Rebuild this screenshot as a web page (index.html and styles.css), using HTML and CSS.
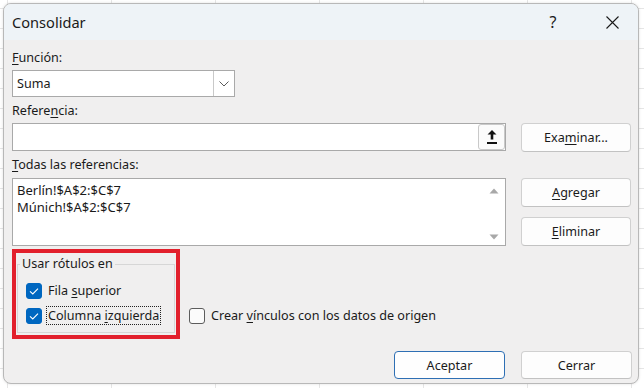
FILE: index.html
```html
<!DOCTYPE html>
<html lang="es">
<head>
<meta charset="utf-8">
<title>Consolidar</title>
<link rel="stylesheet" href="styles.css">
</head>
<body>
<div class="dialog">
  <div class="titlebar">
    <span class="title">Consolidar</span>
    <span class="help">?</span>
    <span class="close"><svg width="13" height="13" viewBox="0 0 13 13"><path d="M0.5 0.5 L12.5 12.5 M12.5 0.5 L0.5 12.5" stroke="#1a1a1a" stroke-width="1.1" fill="none"/></svg></span>
  </div>
  <div class="content">
    <div class="form">
      <div class="lbl lbl-first"><u>F</u>unción:</div>
      <div class="select">
        <span class="sel-text">Suma</span>
        <span class="sel-btn"><svg width="10" height="6" viewBox="0 0 10 6"><path d="M0.5 0.5 L5 5 L9.5 0.5" stroke="#5a5a5a" stroke-width="1" fill="none"/></svg></span>
      </div>
      <div class="lbl lbl-ref">Refere<u>n</u>cia:</div>
      <div class="refinput">
        <span class="upload"><svg width="12" height="16" viewBox="0 0 12 16"><path d="M6 1 L10.5 5.5 H7.3 V10.5 H4.7 V5.5 H1.5 Z" fill="#111"/><rect x="1" y="13" width="10" height="2" fill="#111"/></svg></span>
      </div>
      <button class="btn btn-side btn-exam">Exa<u>m</u>inar...</button>
      <div class="lbl lbl-all"><u>T</u>odas las referencias:</div>
      <div class="list">
        <div class="list-items">
          <div class="item">Berlín!$A$2:$C$7</div>
          <div class="item">Múnich!$A$2:$C$7</div>
        </div>
        <div class="scroll">
          <svg width="10" height="6" viewBox="0 0 10 6"><path d="M5 0.5 L9.5 5.5 H0.5 Z" fill="#a8a8a8"/></svg>
          <svg width="10" height="6" viewBox="0 0 10 6"><path d="M0.5 0.5 H9.5 L5 5.5 Z" fill="#a8a8a8"/></svg>
        </div>
      </div>
      <div class="side-stack">
        <button class="btn btn-side"><u>A</u>gregar</button>
        <button class="btn btn-side"><u>E</u>liminar</button>
      </div>
    </div>
    <div class="options">
      <div class="highlight">
        <fieldset class="group">
          <legend>Usar rótulos en</legend>
          <div class="check">
            <span class="box checked"><svg width="16" height="16" viewBox="0 0 16 16"><path d="M4 8.3 L6.8 11 L12 5.6" stroke="#fff" stroke-width="1.1" fill="none"/></svg></span>
            <span class="check-text">Fila <u>s</u>uperior</span>
          </div>
          <div class="check">
            <span class="box checked"><svg width="16" height="16" viewBox="0 0 16 16"><path d="M4 8.3 L6.8 11 L12 5.6" stroke="#fff" stroke-width="1.1" fill="none"/></svg></span>
            <span class="check-text focus">Columna <u>i</u>zquierda</span>
          </div>
        </fieldset>
      </div>
      <div class="check check-link">
        <span class="box"></span>
        <span class="check-text">Crear <u>v</u>ínculos con los datos de origen</span>
      </div>
    </div>
    <div class="footer">
      <button class="btn btn-foot btn-primary">Aceptar</button>
      <button class="btn btn-foot">Cerrar</button>
    </div>
  </div>
</div>
</body>
</html>
```
FILE: styles.css
```css
* { box-sizing: border-box; }
html, body { margin: 0; padding: 0; }
body {
  width: 644px;
  height: 388px;
  overflow: hidden;
  padding: 3px 0 0 3px;
  background-color: #ffffff;
  background-image:
    linear-gradient(to right, #e6e6e6 1px, transparent 1px),
    linear-gradient(to bottom, #e6e6e6 1px, transparent 1px);
  background-size: 104px 20px;
  background-position: 7px 8px;
  font-family: "Noto Sans", "Open Sans", sans-serif;
  font-size: 12.6px;
  color: #1a1a1a;
}
u { text-decoration: underline; text-underline-offset: 2px; text-decoration-thickness: 1px; }

.dialog {
  width: 636px;
  height: 381px;
  background: #f0efef;
  border: 1px solid #b8b8b8;
  border-radius: 8px;
  overflow: hidden;
  box-shadow: 0 0 3px rgba(0, 0, 0, 0.12);
}

.titlebar {
  height: 36px;
  background: #eef3f7;
  display: flex;
  align-items: center;
  padding-left: 8px;
}
.title { flex: 1; font-size: 14.6px; }
.help { width: 40px; text-align: center; font-size: 16px; margin-right: 16px; }
.close { width: 46px; display: flex; justify-content: center; margin-right: 3px; }
.close svg { display: block; }

.content { padding: 9px 6px 0 8px; }

.form {
  display: grid;
  grid-template-columns: 494px 110px;
  column-gap: 15px;
  align-items: start;
}
.lbl { grid-column: 1; line-height: 18px; height: 18px; }
.lbl-first { margin-bottom: 3px; }
.lbl-ref { margin-top: 5px; margin-bottom: 3px; }
.lbl-all { margin-top: 4px; margin-bottom: 4px; }

.select {
  grid-column: 1;
  width: 223px;
  height: 27px;
  background: #fff;
  border: 1px solid #a9a9a9;
  display: flex;
}
.sel-text { flex: 1; padding-left: 4px; line-height: 25px; }
.sel-btn {
  width: 21px;
  border-left: 1px solid #c9c9c9;
  display: flex;
  align-items: center;
  justify-content: center;
}
.sel-btn svg { display: block; }

.refinput {
  grid-column: 1;
  height: 28px;
  background: #fff;
  border: 1px solid #a9a9a9;
  display: flex;
  justify-content: flex-end;
  align-items: center;
}
.upload {
  width: 27px;
  height: 26px;
  border: 1px solid #c9c9c9;
  border-radius: 3px;
  background: #fbfbfb;
  display: flex;
  align-items: center;
  justify-content: center;
}
.upload svg { display: block; }

.btn {
  font-family: inherit;
  font-size: 12.6px;
  color: #1a1a1a;
  background: #fdfdfd;
  border: 1px solid #d0d0d0;
  border-bottom-color: #c2c2c2;
  border-radius: 4px;
  padding: 0;
  text-align: center;
}
.btn-side { width: 110px; height: 29px; }
.btn-exam { grid-column: 2; }

.list {
  grid-column: 1;
  height: 68px;
  background: #fff;
  border: 1px solid #a9a9a9;
  display: flex;
}
.list-items { flex: 1; padding: 3px 0 0 4px; }
.item { line-height: 17px; font-size: 13px; }
.scroll {
  width: 22px;
  display: flex;
  flex-direction: column;
  justify-content: space-between;
  align-items: center;
  padding: 9px 0 5px;
}
.scroll svg { display: block; }

.side-stack {
  grid-column: 2;
  display: flex;
  flex-direction: column;
  gap: 10px;
}

.options {
  display: flex;
  align-items: flex-end;
  margin-top: 3px;
}
.highlight {
  width: 168px;
  border: 4px solid #e2202c;
  padding: 0 1px 2px 1px;
}
.group {
  margin: 2px 0 0 0;
  border: 1px solid #d6d6d6;
  padding: 5px 8px 4px 8px;
  min-width: 0;
}
.group legend {
  padding: 0 2px;
  margin-left: -6px;
  line-height: 18px;
}
.check {
  display: flex;
  align-items: center;
  height: 25px;
  white-space: nowrap;
}
.box {
  width: 16px;
  height: 16px;
  border-radius: 3px;
  border: 1px solid #5c5c5c;
  background: #fbfbfb;
  margin-right: 4px;
  flex: none;
}
.box.checked {
  background: #0067c0;
  border-color: #0067c0;
}
.box svg { display: block; margin: -1px; }
.check-text {
  border: 1px dotted transparent;
  padding: 0 1px;
  line-height: 17px;
}
.check-text.focus { border-color: #222; }
.check-link { margin-left: 9px; margin-bottom: 11px; }

.footer {
  display: flex;
  justify-content: flex-end;
  gap: 16px;
  margin-top: 12px;
}
.btn-foot { width: 111px; height: 28px; }
.btn-primary { border-color: #2e6fb4; border-bottom-color: #2e6fb4; background: #fefefe; }
```
